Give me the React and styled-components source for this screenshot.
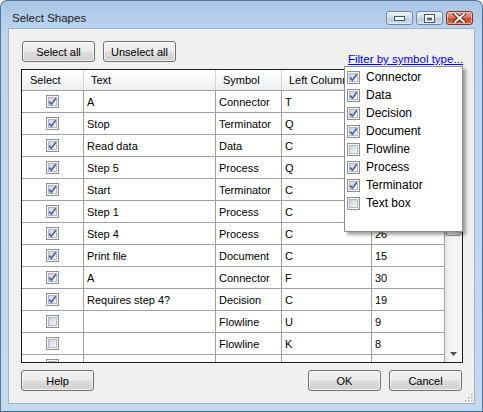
import styled, { createGlobalStyle } from "styled-components";

const GlobalStyle = createGlobalStyle`
  html, body {
    margin: 0;
    padding: 0;
  }

  body {
    width: 483px;
    height: 412px;
    overflow: hidden;
    background: #ffffff;
    font-family: "Liberation Sans", Arial, sans-serif;
    font-size: 11px;
    color: #000000;
  }

  * {
    box-sizing: border-box;
  }
`;

const Window = styled.div`
  display: flex;
  flex-direction: column;
  width: 483px;
  height: 412px;
  padding: 0 7px 7px 7px;
  background: linear-gradient(to bottom, #a9c6e6 0px, #bcd4ee 30px, #c4daf1 100%);
  border: 1px solid #53739a;
  border-bottom-color: #2d7088;
  border-radius: 7px 7px 0 0;
`;

const TitleBar = styled.div`
  display: flex;
  align-items: flex-start;
  justify-content: space-between;
  height: 27px;
  padding: 10px 2px 0 4px;
`;

const Title = styled.div`
  font-size: 11.5px;
  line-height: 14px;
  color: #1b1b1b;
`;

const CaptionButtons = styled.div`
  display: flex;
  gap: 3px;
`;

const CaptionButton = styled.div`
  display: flex;
  align-items: center;
  justify-content: center;
  width: 27px;
  height: 14px;
  border: 1px solid ${({ close }) => (close ? "#7d3527" : "#6f86a6")};
  border-radius: 3px;
  background: ${({ close }) =>
    close
      ? "linear-gradient(to bottom, #e8a596 0%, #d5775f 45%, #c24d33 55%, #cf6a4e 100%)"
      : "linear-gradient(to bottom, #e9eff7 0%, #d3dfed 45%, #bccde2 55%, #cbd9ea 100%)"};
  box-shadow: inset 0 0 0 1px rgba(255, 255, 255, 0.45);
`;

const Client = styled.div`
  position: relative;
  display: flex;
  flex: 1;
  flex-direction: column;
  padding: 12px 11px 12px 12px;
  background: #f0f0f0;
  border: 1px solid #9db3cd;
`;

const TopRow = styled.div`
  display: flex;
  align-items: flex-start;
  justify-content: space-between;
  height: 28px;
  padding-left: 1px;
`;

const ButtonGroup = styled.div`
  display: flex;
  gap: 8px;
  padding-right: ${({ right }) => (right ? "1px" : "0")};
`;

const Button = styled.div`
  display: flex;
  align-items: center;
  justify-content: center;
  width: 73px;
  height: 21px;
  border: 1px solid #707070;
  border-radius: 3px;
  background: linear-gradient(to bottom, #f2f2f2 0%, #ebebeb 48%, #dddddd 52%, #cfcfcf 100%);
  box-shadow: inset 0 0 0 1px rgba(255, 255, 255, 0.7);
  font-size: 11px;
  color: #000000;
`;

const FilterLink = styled.a`
  align-self: flex-end;
  margin-bottom: 4px;
  font-size: 11.5px;
  color: #0000ff;
  text-decoration: underline;
  cursor: pointer;
`;

const GridFrame = styled.div`
  display: flex;
  height: 294px;
  border: 1px solid #1c1c1c;
  background: #ffffff;
`;

const GridBody = styled.div`
  flex: 1;
  overflow: hidden;
`;

const columns = "62px 132px 66px 90px 73px";

const HeaderRow = styled.div`
  display: grid;
  grid-template-columns: ${columns};
  height: 21px;
  background: linear-gradient(to bottom, #ffffff 0%, #f7f8f9 50%, #eceef0 100%);
  border-bottom: 1px solid #a0a0a0;
`;

const HeaderCell = styled.div`
  display: flex;
  align-items: center;
  padding-left: ${({ pad }) => pad || "7px"};
  border-right: 1px solid #d5d5d5;
  white-space: nowrap;
  overflow: hidden;
`;

const Row = styled.div`
  display: grid;
  grid-template-columns: ${columns};
  height: 22px;
  border-bottom: 1px solid #a0a0a0;
`;

const Cell = styled.div`
  display: flex;
  align-items: center;
  justify-content: ${({ center }) => (center ? "center" : "flex-start")};
  padding-left: ${({ center }) => (center ? "0" : "3px")};
  border-right: 1px solid #a0a0a0;
  white-space: nowrap;
  overflow: hidden;
`;

const ScrollBar = styled.div`
  display: flex;
  flex-direction: column;
  width: 17px;
  background: linear-gradient(to right, #e6e6e6 0%, #f4f4f4 30%, #f4f4f4 100%);
`;

const ScrollArrow = styled.div`
  display: flex;
  align-items: center;
  justify-content: center;
  height: 17px;
`;

const ScrollThumb = styled.div`
  height: 149px;
  margin: 0 1px;
  border: 1px solid #979797;
  border-radius: 2px;
  background: linear-gradient(to right, #f2f2f2 0%, #e4e4e4 50%, #d6d6d6 100%);
`;

const ScrollSpacer = styled.div`
  flex: 1;
`;

const BottomRow = styled.div`
  display: flex;
  justify-content: space-between;
  margin-top: 7px;
`;

const FilterMenu = styled.div`
  position: absolute;
  left: 335px;
  top: 37px;
  width: 119px;
  height: 166px;
  padding: 1px 0 0 2px;
  background: #ffffff;
  border: 1px solid #8c8c8c;
  box-shadow: 3px 3px 3px rgba(0, 0, 0, 0.35);
`;

const MenuItem = styled.div`
  display: flex;
  align-items: center;
  gap: 6px;
  height: 18px;
  font-size: 12px;
  color: #000000;
`;

const Grip = styled.svg`
  position: absolute;
  right: 1px;
  bottom: 1px;
`;

function CheckBox({ checked }) {
  return (
    <svg width="13" height="13" viewBox="0 0 13 13">
      <defs>
        <linearGradient id="cbFill" x1="0" y1="0" x2="1" y2="1">
          <stop offset="0" stopColor="#cbd0d8" />
          <stop offset="1" stopColor="#f7f8fa" />
        </linearGradient>
      </defs>
      <rect x="0.5" y="0.5" width="12" height="12" fill="#f4f4f4" stroke="#8e8f8f" />
      <rect x="2.5" y="2.5" width="8" height="8" fill="url(#cbFill)" stroke="#b5b9c0" />
      {checked && (
        <path d="M3.2 6.6 L5.4 9.2 L9.8 3.2" fill="none" stroke="#4d62a6" strokeWidth="1.7" />
      )}
    </svg>
  );
}

// the last column lies under the filter menu for the first rows
const rows = [
  { on: true, text: "A", symbol: "Connector", left: "T", top: "" },
  { on: true, text: "Stop", symbol: "Terminator", left: "Q", top: "" },
  { on: true, text: "Read data", symbol: "Data", left: "C", top: "" },
  { on: true, text: "Step 5", symbol: "Process", left: "Q", top: "" },
  { on: true, text: "Start", symbol: "Terminator", left: "C", top: "" },
  { on: true, text: "Step 1", symbol: "Process", left: "C", top: "" },
  { on: true, text: "Step 4", symbol: "Process", left: "C", top: "26" },
  { on: true, text: "Print file", symbol: "Document", left: "C", top: "15" },
  { on: true, text: "A", symbol: "Connector", left: "F", top: "30" },
  { on: true, text: "Requires step 4?", symbol: "Decision", left: "C", top: "19" },
  { on: false, text: "", symbol: "Flowline", left: "U", top: "9" },
  { on: false, text: "", symbol: "Flowline", left: "K", top: "8" },
  { on: false, text: "", symbol: "Flowline", left: "W", top: "7" },
];

const filters = [
  { name: "Connector", on: true },
  { name: "Data", on: true },
  { name: "Decision", on: true },
  { name: "Document", on: true },
  { name: "Flowline", on: false },
  { name: "Process", on: true },
  { name: "Terminator", on: true },
  { name: "Text box", on: false },
];

export default function App() {
  return (
    <>
      <GlobalStyle />
      <Window>
        <TitleBar>
          <Title>Select Shapes</Title>
          <CaptionButtons>
            <CaptionButton>
              <svg width="11" height="5" viewBox="0 0 11 5">
                <rect x="0.5" y="0.5" width="10" height="4" fill="#ffffff" stroke="#45556e" />
              </svg>
            </CaptionButton>
            <CaptionButton>
              <svg width="11" height="9" viewBox="0 0 11 9">
                <rect x="0.5" y="0.5" width="10" height="8" fill="#ffffff" stroke="#45556e" />
                <rect x="3" y="3.5" width="5" height="3" fill="#5a6a82" />
              </svg>
            </CaptionButton>
            <CaptionButton close>
              <svg width="13" height="10" viewBox="0 0 13 10">
                <path d="M2 1 L11 9 M11 1 L2 9" stroke="#5b2117" strokeWidth="3.6" strokeLinecap="square" />
                <path d="M2 1 L11 9 M11 1 L2 9" stroke="#ffffff" strokeWidth="1.8" strokeLinecap="square" />
              </svg>
            </CaptionButton>
          </CaptionButtons>
        </TitleBar>

        <Client>
          <TopRow>
            <ButtonGroup>
              <Button>Select all</Button>
              <Button>Unselect all</Button>
            </ButtonGroup>
            <FilterLink>Filter by symbol type...</FilterLink>
          </TopRow>

          <GridFrame>
            <GridBody>
              <HeaderRow>
                <HeaderCell pad="8px">Select</HeaderCell>
                <HeaderCell>Text</HeaderCell>
                <HeaderCell>Symbol</HeaderCell>
                <HeaderCell>Left Column</HeaderCell>
                <HeaderCell />
              </HeaderRow>
              {rows.map((row, i) => (
                <Row key={i}>
                  <Cell center>
                    <CheckBox checked={row.on} />
                  </Cell>
                  <Cell>{row.text}</Cell>
                  <Cell>{row.symbol}</Cell>
                  <Cell>{row.left}</Cell>
                  <Cell>{row.top}</Cell>
                </Row>
              ))}
            </GridBody>
            <ScrollBar>
              <ScrollArrow>
                <svg width="7" height="4" viewBox="0 0 7 4">
                  <path d="M0 4 L3.5 0 L7 4 Z" fill="#4d4d4d" />
                </svg>
              </ScrollArrow>
              <ScrollThumb />
              <ScrollSpacer />
              <ScrollArrow>
                <svg width="7" height="4" viewBox="0 0 7 4">
                  <path d="M0 0 L7 0 L3.5 4 Z" fill="#4d4d4d" />
                </svg>
              </ScrollArrow>
            </ScrollBar>
          </GridFrame>

          <BottomRow>
            <Button>Help</Button>
            <ButtonGroup right>
              <Button>OK</Button>
              <Button>Cancel</Button>
            </ButtonGroup>
          </BottomRow>

          <FilterMenu>
            {filters.map((f) => (
              <MenuItem key={f.name}>
                <CheckBox checked={f.on} />
                {f.name}
              </MenuItem>
            ))}
          </FilterMenu>

          <Grip width="10" height="10" viewBox="0 0 10 10">
            {[
              [8, 2],
              [8, 5],
              [5, 5],
              [8, 8],
              [5, 8],
              [2, 8],
            ].map(([x, y]) => (
              <rect key={`${x}-${y}`} x={x} y={y} width="1.5" height="1.5" fill="#b4b4b4" />
            ))}
          </Grip>
        </Client>
      </Window>
    </>
  );
}
